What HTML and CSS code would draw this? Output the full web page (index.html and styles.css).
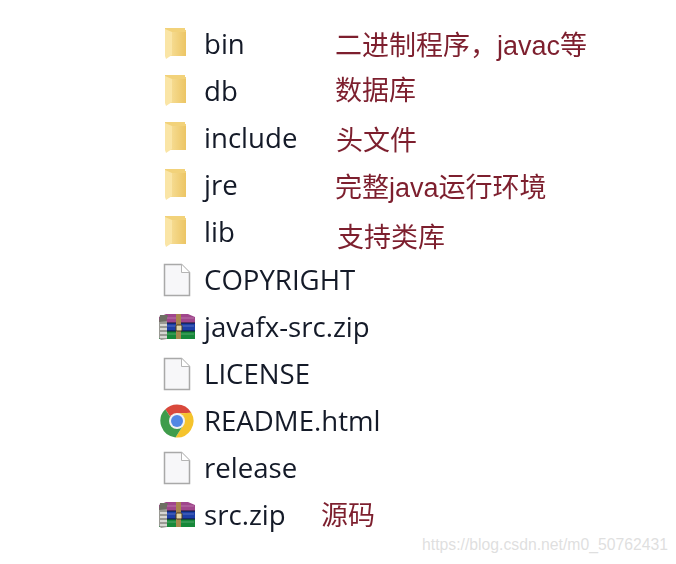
FILE: index.html
```html
<!DOCTYPE html>
<html lang="zh-CN">
<head>
    <meta charset="UTF-8">
    <meta name="viewport" content="width=device-width, initial-scale=1.0">
    <title>JDK 目录结构</title>
    <link rel="stylesheet" href="styles.css">
</head>
<body>

    <svg class="defs" width="0" height="0">
        <defs>
            <linearGradient id="folderFront" x1="0" y1="0" x2="1" y2="0">
                <stop offset="0" stop-color="#f6dc92"/>
                <stop offset="1" stop-color="#ecc564"/>
            </linearGradient>
            <symbol id="folder" viewBox="0 0 36 34">
                <path d="M6 1h20v2h1v26H6z" fill="#f2d27a"/>
                <path d="M12 5h15v24H12z" fill="url(#folderFront)"/>
                <path d="M6 2l7 3v23l-6 4-1-3z" fill="#fae5a6"/>
            </symbol>
            <symbol id="doc" viewBox="0 0 36 34">
                <path d="M5.500 1.500h17l8 8v23h-25z" fill="#f7f7f9" stroke="#a9a9a9" stroke-width="1.500"/>
                <path d="M22.500 1.500v8h8" fill="#fff" stroke="#b5b5b5"/>
            </symbol>
            <symbol id="rar" viewBox="0 0 36 26">
                <path d="M0 3l7-3h22l7 3v6H0z" fill="#a0468c"/>
                <path d="M1 1h8l-2 7H0z" fill="#6d6f63"/>
                <path d="M0 9h36v8H0z" fill="#1d3fa8"/>
                <path d="M0 17h36v8H0z" fill="#17883a"/>
                <path d="M0 8l8-1v18l-6 1-2-2z" fill="#9a9a94"/>
                <path d="M1 11h7M1 15h7M1 19h7M1 23h7" stroke="#ecece8" stroke-width="1.300"/>
                <path d="M8 4h27M8 12h27M8 20h27" stroke="#ffffff" stroke-opacity=".25"/>
                <path d="M8 9h28M8 17h28" stroke="#0d1530" stroke-width="1.200"/>
                <rect x="17" y="0" width="5" height="25" fill="#a9874d"/>
                <rect x="17" y="11" width="6" height="6" rx="1" fill="#e3d6a8" stroke="#4d3a1c"/>
            </symbol>
            <symbol id="chrome" viewBox="0 0 34 34">
                <path d="M17 .5A16.500 16.500 0 0 1 31.300 8.800L17 9.500 10.500 13.200 5.300 5.300A16.500 16.500 0 0 1 17 .5z" fill="#d9483b"/>
                <path d="M31.300 8.800A16.500 16.500 0 0 1 15.500 33.400L23.500 20.700 17 9.500z" fill="#f5c32c"/>
                <path d="M5.300 5.300A16.500 16.500 0 0 0 15.500 33.400L23.500 20.700 10.500 13.200z" fill="#3f9c4b"/>
                <circle cx="17" cy="17" r="8" fill="#f1f1f1"/>
                <circle cx="17" cy="17" r="6" fill="#5187e4"/>
            </symbol>
        </defs>
    </svg>

    <ul class="file-list">
        <li class="row">
            <svg class="icon"><use href="#folder"/></svg>
            <span class="name">bin</span>
            <span class="note note-bin">二进制程序，javac等</span>
        </li>
        <li class="row">
            <svg class="icon"><use href="#folder"/></svg>
            <span class="name">db</span>
            <span class="note note-db">数据库</span>
        </li>
        <li class="row">
            <svg class="icon"><use href="#folder"/></svg>
            <span class="name">include</span>
            <span class="note note-include">头文件</span>
        </li>
        <li class="row">
            <svg class="icon"><use href="#folder"/></svg>
            <span class="name">jre</span>
            <span class="note note-jre">完整java运行环境</span>
        </li>
        <li class="row">
            <svg class="icon"><use href="#folder"/></svg>
            <span class="name">lib</span>
            <span class="note note-lib">支持类库</span>
        </li>
        <li class="row">
            <svg class="icon"><use href="#doc"/></svg>
            <span class="name">COPYRIGHT</span>
        </li>
        <li class="row">
            <svg class="icon"><use href="#rar"/></svg>
            <span class="name">javafx-src.zip</span>
        </li>
        <li class="row">
            <svg class="icon"><use href="#doc"/></svg>
            <span class="name">LICENSE</span>
        </li>
        <li class="row">
            <svg class="icon"><use href="#chrome"/></svg>
            <span class="name">README.html</span>
        </li>
        <li class="row">
            <svg class="icon"><use href="#doc"/></svg>
            <span class="name">release</span>
        </li>
        <li class="row">
            <svg class="icon"><use href="#rar"/></svg>
            <span class="name">src.zip</span>
            <span class="note note-src">源码</span>
        </li>
    </ul>

    <div class="watermark">https://blog.csdn.net/m0_50762431</div>

</body>
</html>
```

FILE: styles.css
```css
body {
    margin: 0;
    background-color: #ffffff;
    font-family: "Open Sans", "Noto Sans CJK SC", sans-serif;
    overflow: hidden;
}
.defs {
    display: block;
    height: 0;
}
.file-list {
    list-style: none;
    margin: 0;
    padding: 20px 0 0 159px;
}
.row {
    display: grid;
    grid-template-columns: 36px 122px 1fr;
    column-gap: 9px;
    align-items: center;
    height: 47.2px;
}
.icon {
    width: 36px;
    height: 34px;
    filter: blur(0.3px);
}
.name {
    font-size: 27.6px;
    line-height: 34px;
    margin-top: -2px;
    color: #141a28;
    white-space: nowrap;
    filter: blur(0.3px);
}
.note {
    font-family: "Liberation Sans", "Noto Sans CJK SC", sans-serif;
    font-size: 27px;
    color: #7d1f2e;
    white-space: nowrap;
    filter: blur(0.3px);
}
.note-bin {
    transform: translate(0px, 0px);
}
.note-db {
    transform: translate(0px, -2px);
}
.note-include {
    transform: translate(1px, 1px);
}
.note-jre {
    transform: translate(0px, 0px);
}
.note-lib {
    transform: translate(2px, 3px);
}
.note-src {
    transform: translate(-14px, -2px);
}
.watermark {
    position: absolute;
    left: 422px;
    top: 536px;
    font-family: "Liberation Sans", sans-serif;
    font-size: 15.75px;
    color: #dfdfdf;
    white-space: nowrap;
}
```
